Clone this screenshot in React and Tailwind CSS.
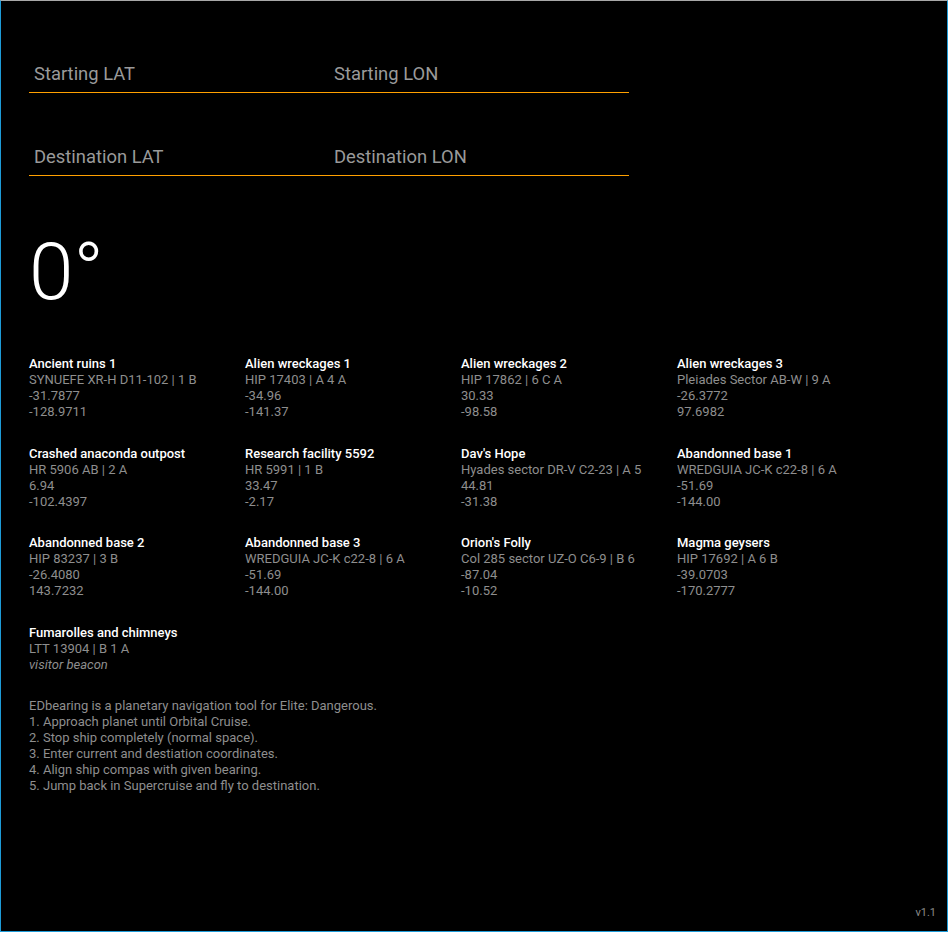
import React from "react";

const places = [
  { t: "Ancient ruins 1", s: "SYNUEFE XR-H D11-102 | 1 B", a: "-31.7877", b: "-128.9711" },
  { t: "Alien wreckages 1", s: "HIP 17403 | A 4 A", a: "-34.96", b: "-141.37" },
  { t: "Alien wreckages 2", s: "HIP 17862 | 6 C A", a: "30.33", b: "-98.58" },
  { t: "Alien wreckages 3", s: "Pleiades Sector AB-W | 9 A", a: "-26.3772", b: "97.6982" },
  { t: "Crashed anaconda outpost", s: "HR 5906 AB | 2 A", a: "6.94", b: "-102.4397" },
  { t: "Research facility 5592", s: "HR 5991 | 1 B", a: "33.47", b: "-2.17" },
  { t: "Dav's Hope", s: "Hyades sector DR-V C2-23 | A 5", a: "44.81", b: "-31.38" },
  { t: "Abandonned base 1", s: "WREDGUIA JC-K c22-8 | 6 A", a: "-51.69", b: "-144.00" },
  { t: "Abandonned base 2", s: "HIP 83237 | 3 B", a: "-26.4080", b: "143.7232" },
  { t: "Abandonned base 3", s: "WREDGUIA JC-K c22-8 | 6 A", a: "-51.69", b: "-144.00" },
  { t: "Orion's Folly", s: "Col 285 sector UZ-O C6-9 | B 6", a: "-87.04", b: "-10.52" },
  { t: "Magma geysers", s: "HIP 17692 | A 6 B", a: "-39.0703", b: "-170.2777" },
];

function Field({ ph }) {
  return (
    <div className="w-[300px] border-b border-[#ffa000]">
      <input
        className="w-full h-[37px] bg-transparent outline-none px-[5px] text-[18.4px] text-white placeholder:text-[#9a9a9a]"
        placeholder={ph}
      />
    </div>
  );
}

export default function App() {
  return (
    <div
      className="w-[948px] h-[932px] bg-black border-t border-t-[#a8a8a8] border-x border-b border-x-[#1e9bd7] border-b-[#1e9bd7] flex flex-col text-[13px] leading-[16px]"
      style={{ fontFamily: "Roboto, 'Liberation Sans', sans-serif" }}
    >
      <div className="pl-[28px] pt-[54px] flex-1">
        <div className="flex">
          <Field ph="Starting LAT" />
          <Field ph="Starting LON" />
        </div>
        <div className="flex mt-[45px]">
          <Field ph="Destination LAT" />
          <Field ph="Destination LON" />
        </div>
        <div className="mt-[56px] text-[80px] leading-none font-light text-white">0°</div>
        <div className="mt-[44px] grid grid-cols-[216px_216px_216px_216px] gap-y-[25.6px]">
          {places.map((p) => (
            <div key={p.t}>
              <div className="font-medium text-white">{p.t}</div>
              <div className="text-[#8e8e8e]">{p.s}</div>
              <div className="text-[#8e8e8e]">{p.a}</div>
              <div className="text-[#8e8e8e]">{p.b}</div>
            </div>
          ))}
          <div>
            <div className="font-medium text-white">Fumarolles and chimneys</div>
            <div className="text-[#8e8e8e]">LTT 13904 | B 1 A</div>
            <div className="text-[#8e8e8e] italic">visitor beacon</div>
          </div>
        </div>
        <div className="mt-[25px] text-[#8e8e8e]">
          <div>EDbearing is a planetary navigation tool for Elite: Dangerous.</div>
          <div>1. Approach planet until Orbital Cruise.</div>
          <div>2. Stop ship completely (normal space).</div>
          <div>3. Enter current and destiation coordinates.</div>
          <div>4. Align ship compas with given bearing.</div>
          <div>5. Jump back in Supercruise and fly to destination.</div>
        </div>
      </div>
      <div className="flex justify-end pr-[11px] pb-[12px] text-[11px] leading-[12px] text-[#8a8a8a]">v1.1</div>
    </div>
  );
}
